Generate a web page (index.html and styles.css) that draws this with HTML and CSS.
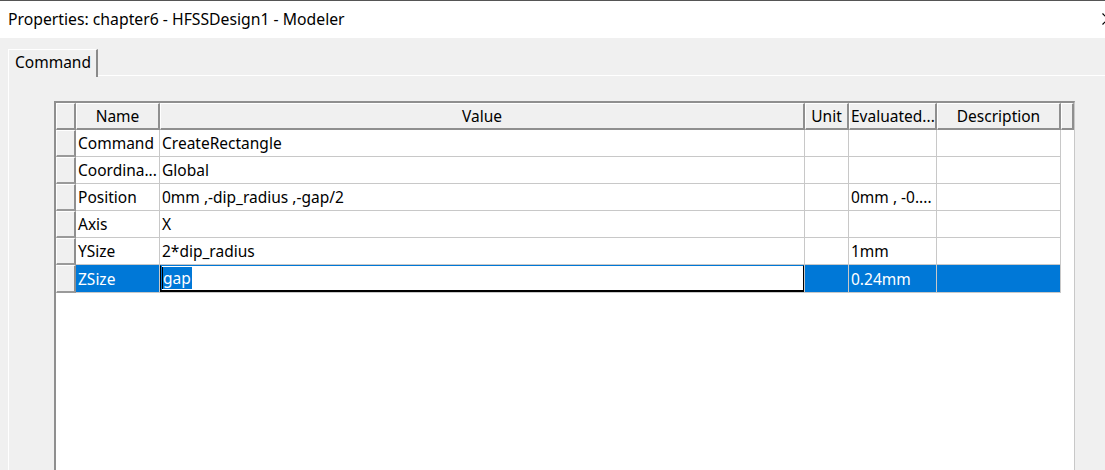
FILE: index.html
```html
<!DOCTYPE html>
<html>
<head>
<meta charset="utf-8">
<title>Properties</title>
<link rel="stylesheet" href="styles.css">
</head>
<body>
<div class="window">
  <div class="titlebar">
    <span class="title">Properties: chapter6 - HFSSDesign1 - Modeler</span>
    <svg class="close" width="3" height="13" viewBox="0 0 3 13"><path d="M0.5 0.5 L12 12 M0.5 11.5 L12 0" stroke="#000" stroke-width="1.2" fill="none"/></svg>
  </div>
  <div class="client">
    <div class="tabstrip">
      <div class="tab">Command</div>
      <div class="tabrest"></div>
    </div>
    <div class="page">
      <div class="grid">
        <table class="props">
          <colgroup>
            <col class="c-rh"><col class="c-name"><col class="c-value"><col class="c-unit"><col class="c-eval"><col class="c-desc"><col class="c-fill">
          </colgroup>
          <thead>
            <tr>
              <th class="hdr"></th>
              <th class="hdr">Name</th>
              <th class="hdr">Value</th>
              <th class="hdr">Unit</th>
              <th class="hdr left">Evaluated...</th>
              <th class="hdr">Description</th>
              <th class="hdr"></th>
            </tr>
          </thead>
          <tbody>
            <tr><th class="rh"></th><td>Command</td><td>CreateRectangle</td><td></td><td></td><td></td><td class="fill"></td></tr>
            <tr><th class="rh"></th><td>Coordina...</td><td>Global</td><td></td><td></td><td></td><td class="fill"></td></tr>
            <tr><th class="rh"></th><td>Position</td><td>0mm ,-dip_radius ,-gap/2</td><td></td><td>0mm , -0....</td><td></td><td class="fill"></td></tr>
            <tr><th class="rh"></th><td>Axis</td><td>X</td><td></td><td></td><td></td><td class="fill"></td></tr>
            <tr><th class="rh"></th><td>YSize</td><td>2*dip_radius</td><td></td><td>1mm</td><td></td><td class="fill"></td></tr>
            <tr class="sel"><th class="rh"></th><td>ZSize</td><td class="edit"><div class="editbox"><span class="selected">gap</span></div></td><td></td><td>0.24mm</td><td></td><td class="fill"></td></tr>
          </tbody>
        </table>
      </div>
    </div>
  </div>
</div>
</body>
</html>
```

FILE: styles.css
```css
html, body {
  margin: 0;
  padding: 0;
  background: #f0f0f0;
  overflow: hidden;
}
body {
  font-family: "Noto Sans", "Open Sans", "Liberation Sans", sans-serif;
  font-size: 15.5px;
  color: #000;
}
.window {
  width: 1105px;
  height: 470px;
  display: flex;
  flex-direction: column;
  overflow: hidden;
}
.titlebar {
  flex: 0 0 auto;
  height: 37px;
  background: #fff;
  border-top: 1px solid #555;
  display: flex;
  align-items: center;
  padding-left: 8px;
}
.title {
  flex: 1;
  font-size: 15.75px;
  line-height: 20px;
  padding-bottom: 1px;
}
.close {
  display: block;
  margin-top: -1px;
}
.client {
  flex: 1 1 auto;
  min-height: 0;
  display: flex;
  flex-direction: column;
  padding-top: 10px;
  padding-left: 8px;
}
.tabstrip {
  flex: 0 0 auto;
  display: flex;
  align-items: flex-end;
  height: 28px;
}
.tab {
  height: 27px;
  width: 81px;
  border-top: 1px solid #fff;
  border-left: 1px solid #fff;
  border-right: 2px solid #8a8a8a;
  box-sizing: content-box;
  padding-left: 6px;
  line-height: 25px;
  background: #f0f0f0;
  position: relative;
  top: 1px;
}
.tabrest {
  flex: 1;
  border-bottom: 1px solid #fff;
}
.page {
  flex: 1 1 auto;
  min-height: 0;
  border-left: 1px solid #fff;
  padding-top: 25px;
  padding-left: 45px;
}
.grid {
  width: 1018px;
  height: 400px;
  background: #fff;
  border-top: 2px solid #8f8f8f;
  border-left: 2px solid #8f8f8f;
  border-right: 1px solid #c8c8c8;
}
.props {
  border-collapse: separate;
  border-spacing: 0;
  table-layout: fixed;
  width: 1018px;
}
.c-rh { width: 20px; }
.c-name { width: 84px; }
.c-value { width: 645px; }
.c-unit { width: 44px; }
.c-eval { width: 88px; }
.c-desc { width: 124px; }
.c-fill { width: 13px; }

.props th, .props td {
  padding: 0;
  height: 27px;
  box-sizing: border-box;
  white-space: nowrap;
  overflow: hidden;
  font-weight: normal;
}
.hdr, .rh {
  background: #f0f0f0;
  border-top: 1px solid #fff;
  border-left: 1px solid #fff;
  border-right: 2px solid #8f8f8f;
  border-bottom: 2px solid #8f8f8f;
  text-align: center;
}
.hdr.left {
  text-align: left;
  padding-left: 1px;
}
.rh {
  border-bottom: 2px solid #9a9a9a;
}
.props td {
  border-right: 1px solid #c8c8c8;
  border-bottom: 1px solid #c8c8c8;
  padding-left: 2px;
  text-align: left;
}
.props td.fill {
  border: none;
  background: #fff;
}
.sel td {
  background: #0078d7;
  color: #fff;
}
.sel td.fill {
  background: #fff;
}
.sel td.edit {
  padding: 0;
  background: #0078d7;
}
.editbox {
  box-sizing: border-box;
  height: 27px;
  background: #fff;
  border-left: 1px solid #000;
  border-right: 1px solid #000;
  border-bottom: 2px solid #000;
  border-top: 1px solid #0078d7;
  box-shadow: inset 1px 0 0 #0078d7;
  padding-left: 1px;
  padding-top: 1px;
  color: #000;
}
.selected {
  display: inline-block;
  background: #0078d7;
  color: #fff;
  line-height: 22px;
  padding-right: 1px;
  border-left: 1px solid #000;
}
```
